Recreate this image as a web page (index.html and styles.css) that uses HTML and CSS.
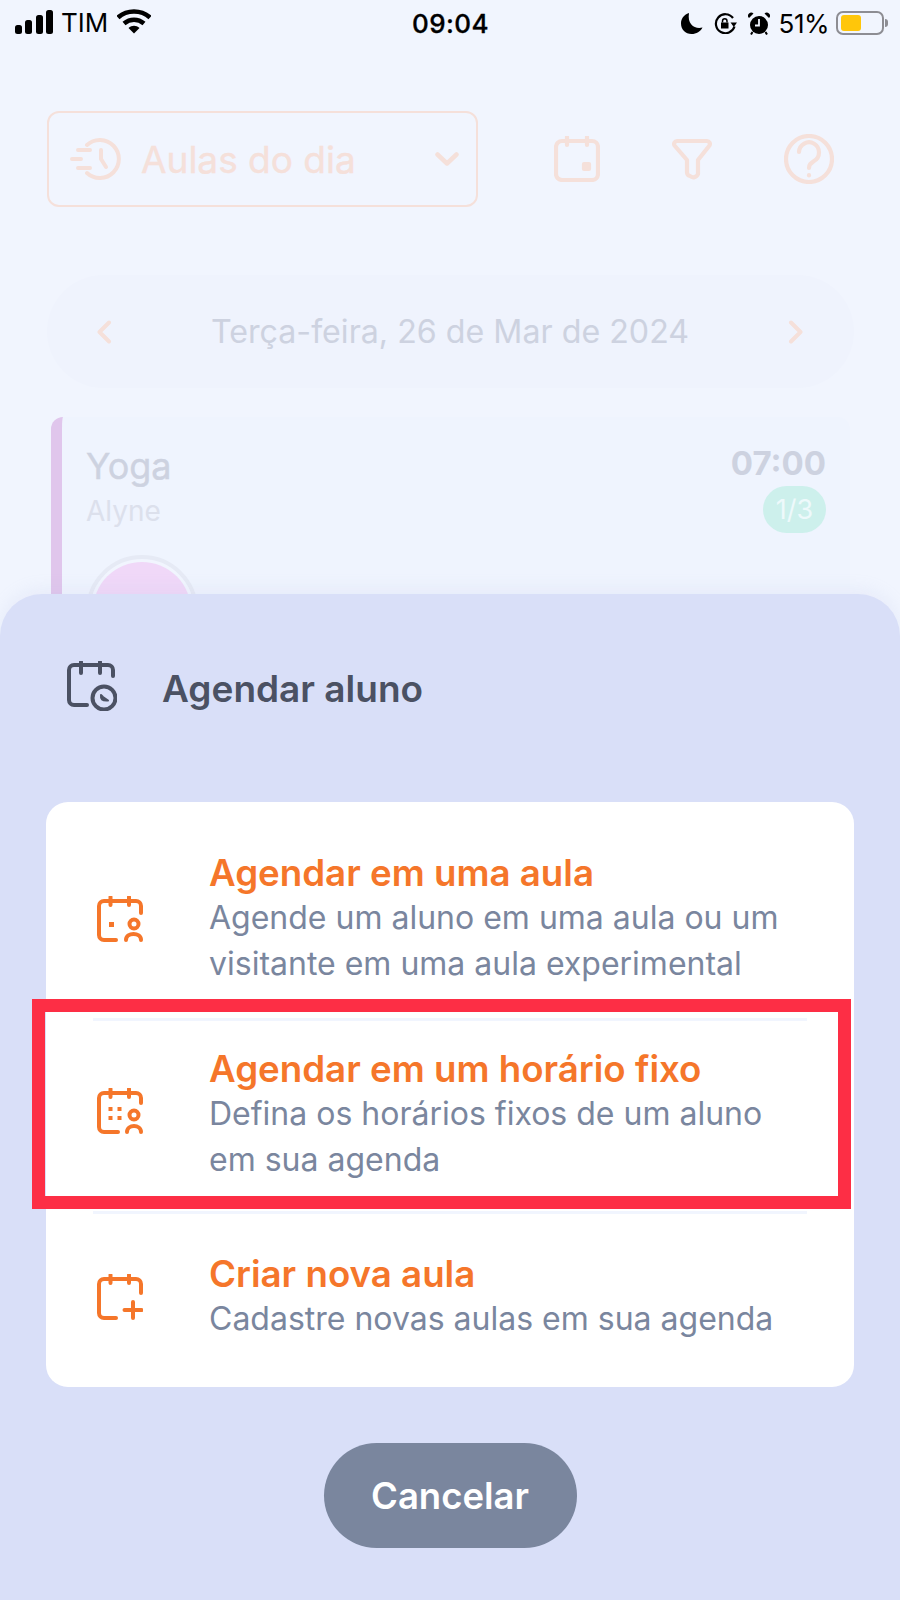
FILE: index.html
```html
<!DOCTYPE html>
<html lang="pt-BR">
<head>
<meta charset="utf-8">
<title>Agendar aluno</title>
<link rel="stylesheet" href="styles.css">
</head>
<body>
<div class="screen">
  <header class="status">
    <div class="status-left">
      <svg class="signal" width="38" height="24" viewBox="0 0 38 24"><rect x="0" y="15" width="7" height="9" rx="2.5"/><rect x="10" y="10" width="7" height="14" rx="2.5"/><rect x="21" y="5" width="7" height="19" rx="2.5"/><rect x="31" y="0" width="7" height="24" rx="2.5"/></svg>
      <span class="carrier">TIM</span>
      <svg class="wifi" width="34" height="25" viewBox="0 0 34 25"><path d="M1 8.500C10 .5 24 .5 33 8.500" fill="none" stroke="#000" stroke-width="4.600"/><path d="M7 14.500C13 9.500 21 9.500 27 14.500" fill="none" stroke="#000" stroke-width="4.600"/><path d="M11.500 19 17 24.500 22.500 19C19 16 15 16 11.500 19Z"/></svg>
    </div>
    <div class="time">09:04</div>
    <div class="status-right">
      <svg width="22" height="21" viewBox="0 0 22 21"><path d="M8 0C2.500 2 0 6 0 10.500 0 16.500 4.500 21 10.500 21 15.500 21 19.500 18.500 21.500 14.500 14.500 16.500 6 12 8 0Z"/></svg>
      <svg width="25" height="21" viewBox="0 0 25 21"><path d="M21.500 13.500A9.500 9.500 0 1 1 20 5" fill="none" stroke="#000" stroke-width="2.200"/><path d="M17.500 9.500h6.500L20.800 14Z"/><path d="M8 9.500h7.500v6H8z"/><path d="M9.500 9.500V8a2.200 2.200 0 0 1 4.500 0v1.500" fill="none" stroke="#000" stroke-width="1.500"/></svg>
      <svg class="alarm" width="22" height="23" viewBox="0 0 22 23"><circle cx="11" cy="13" r="9"/><path d="M1 6 5.500 1.500a3 3 0 0 0-4.500 4.500ZM21 6 16.500 1.500a3 3 0 0 1 4.500 4.500Z"/><path d="M4.500 20 3 22.500M17.500 20 19 22.500" stroke="#000" stroke-width="2"/><path d="M11 7v6.500H7" fill="none" stroke="#f1f5fe" stroke-width="1.800"/></svg>
      <span class="percent">51%</span>
      <div class="battery"><div class="battery-fill"></div></div>
      <div class="battery-tip"></div>
    </div>
  </header>

  <div class="toolbar">
    <div class="select">
      <svg width="52" height="42" viewBox="0 0 52 42" fill="none" stroke="#f5e0da" stroke-width="4" stroke-linecap="round" stroke-linejoin="round"><path d="M17 7A19 19 0 1 1 17 35"/><path d="M31 12v9l5 8"/><path d="M8 12h12M2 21h9M8 30h12"/></svg>
      <span class="select-label">Aulas do dia</span>
      <svg class="select-chevron" width="24" height="14" viewBox="0 0 24 14" fill="none" stroke="#f5e0da" stroke-width="4.500" stroke-linecap="round" stroke-linejoin="round"><path d="M2.500 2.500 12 11.500 21.500 2.500"/></svg>
    </div>
    <div class="tools">
      <svg width="46" height="46" viewBox="0 0 46 46" fill="none" stroke="#f5e0da" stroke-width="4.200" stroke-linecap="round" stroke-linejoin="round"><path d="M8 5h30a6 6 0 0 1 6 6v27a6 6 0 0 1-6 6H8a6 6 0 0 1-6-6V11a6 6 0 0 1 6-6Z"/><path d="M13 1v8M33 1v8"/><rect x="30" y="28" width="5" height="5" fill="#f5e0da"/></svg>
      <svg width="42" height="42" viewBox="0 0 42 42" fill="none" stroke="#f5e0da" stroke-width="4.200" stroke-linecap="round" stroke-linejoin="round"><path d="M6 3h30a3 3 0 0 1 2.500 4.500L27 22v14a5 5 0 0 1-8 2 4 4 0 0 1-3-4V22L3.500 7.500A3 3 0 0 1 6 3Z"/></svg>
      <svg width="50" height="50" viewBox="0 0 50 50" fill="none" stroke="#f5e0da" stroke-width="4.200" stroke-linecap="round" stroke-linejoin="round"><circle cx="25" cy="25" r="23"/><path d="M15 18a10 10 0 1 1 15 9c-3 2-5 3-5 7"/><path d="M25 41v.5"/></svg>
    </div>
  </div>

  <div class="date-pill">
    <svg width="16" height="24" viewBox="0 0 16 24" fill="none" stroke="#f5e0da" stroke-width="4" stroke-linecap="round" stroke-linejoin="round"><path d="M13 2.500 3.500 12 13 21.500"/></svg>
    <span class="date-label">Terça-feira, 26 de Mar de 2024</span>
    <svg width="16" height="24" viewBox="0 0 16 24" fill="none" stroke="#f5e0da" stroke-width="4" stroke-linecap="round" stroke-linejoin="round"><path d="M3 2.500 12.500 12 3 21.500"/></svg>
  </div>

  <article class="class-card">
    <div class="class-top">
      <div>
        <div class="class-name">Yoga</div>
        <div class="class-teacher">Alyne</div>
      </div>
      <div class="class-meta">
        <div class="class-time">07:00</div>
        <div class="class-badge">1/3</div>
      </div>
    </div>
    <div class="avatar"><div class="avatar-fill"></div></div>
  </article>

  <section class="sheet">
    <div class="sheet-head">
      <svg width="50" height="50" viewBox="0 0 50 50" fill="none" stroke="#4b5163" stroke-width="4" stroke-linecap="round" stroke-linejoin="round"><path d="M20 44H7a5 5 0 0 1-5-5V9a5 5 0 0 1 5-5h34a5 5 0 0 1 5 5v6"/><path d="M14 1v11M33 1v11"/><circle cx="37" cy="37" r="11.500"/><path d="M34 34c-.5 4 1 6 7 5.500L36 36Z" fill="#4b5163" stroke-width="2"/></svg>
      <h2 class="sheet-title">Agendar aluno</h2>
    </div>

    <div class="options">
      <div class="option option-first">
        <svg class="option-icon" width="46" height="46" viewBox="0 0 46 46" fill="none" stroke="#f5762a" stroke-width="4" stroke-linecap="round" stroke-linejoin="round"><path d="M19 44H7a5 5 0 0 1-5-5V10a5 5 0 0 1 5-5h32a5 5 0 0 1 5 5v7"/><path d="M13.500 1v8M32 1v8"/><rect x="12" y="26" width="5" height="5" fill="#f5762a" stroke="none"/><circle cx="37" cy="28" r="4.500"/><path d="M29 44c0-8 15-8 15 0"/></svg>
        <div class="option-text">
          <div class="option-title">Agendar em uma aula</div>
          <div class="option-desc">Agende um aluno em uma aula ou um visitante em uma aula experimental</div>
        </div>
      </div>
      <div class="option option-mid">
        <svg class="option-icon" width="46" height="46" viewBox="0 0 46 46" fill="none" stroke="#f5762a" stroke-width="4" stroke-linecap="round" stroke-linejoin="round"><path d="M21 44H7a5 5 0 0 1-5-5V10a5 5 0 0 1 5-5h32a5 5 0 0 1 5 5v5"/><path d="M13.500 1v8M32 1v8"/><g fill="#f5762a" stroke="none"><rect x="11.500" y="19" width="4" height="4"/><rect x="20.500" y="19" width="4" height="4"/><rect x="11.500" y="28" width="4" height="4"/><rect x="20.500" y="28" width="4" height="4"/></g><circle cx="37" cy="27" r="4.500"/><path d="M30 44c0-8 14-8 14 0"/></svg>
        <div class="option-text">
          <div class="option-title">Agendar em um horário fixo</div>
          <div class="option-desc">Defina os horários fixos de um aluno em sua agenda</div>
        </div>
      </div>
      <div class="option option-last">
        <svg class="option-icon" width="46" height="46" viewBox="0 0 46 46" fill="none" stroke="#f5762a" stroke-width="4" stroke-linecap="round" stroke-linejoin="round"><path d="M19 44H7a5 5 0 0 1-5-5V10a5 5 0 0 1 5-5h32a5 5 0 0 1 5 5v9"/><path d="M13.500 1v8M32 1v8"/><path d="M27.500 36h17M36 28v16"/></svg>
        <div class="option-text">
          <div class="option-title">Criar nova aula</div>
          <div class="option-desc">Cadastre novas aulas em sua agenda</div>
        </div>
      </div>
      <div class="highlight"></div>
    </div>

    <button class="cancel" type="button">Cancelar</button>
  </section>
</div>
</body>
</html>
```
FILE: styles.css
```css
* { box-sizing: border-box; }
html, body { margin: 0; padding: 0; }
body { background: #f1f5fe; font-family: Inter, "Noto Sans", sans-serif; }

.screen { position: relative; width: 900px; height: 1600px; overflow: hidden; background: #f1f5fe; }

/* status bar */
.status { display: grid; grid-template-columns: 1fr auto 1fr; align-items: center; height: 46px; padding: 0 12px 0 15px; color: #000; }
.status-left { display: flex; align-items: center; }
.signal { margin-top: -2px; }
.carrier { margin-left: 8px; font-size: 26px; line-height: 1; }
.wifi { margin-left: 9px; margin-top: -4px; }
.time { margin-left: -2px; font-size: 26px; font-weight: 500; letter-spacing: .4px; -webkit-text-stroke: .3px #000; }
.status-right { display: flex; align-items: center; justify-content: flex-end; }
.status-right svg { margin-right: 10px; }
.status-right .alarm { margin-right: 9px; }
.percent { font-size: 26px; margin-right: 7px; letter-spacing: -.5px; }
.battery { width: 48px; height: 24px; border: 2px solid #8d8d93; border-radius: 7px; padding: 2px 3px; }
.battery-fill { width: 20px; height: 16px; background: #ffc60a; border-radius: 3px; }
.battery-tip { width: 3px; height: 8px; margin-left: 1px; background: #8d8d93; border-radius: 0 3px 3px 0; }

/* dimmed page */
.toolbar { display: flex; align-items: center; margin-top: 65px; padding-left: 47px; }
.select { display: flex; align-items: center; width: 431px; height: 96px; padding: 0 17px 0 21px; border: 2px solid #f5e0da; border-radius: 12px; }
.select-label { margin-left: 19px; font-size: 37px; font-weight: 400; color: #f5e0da; -webkit-text-stroke: .4px #f5e0da; }
.select-chevron { margin-left: auto; }
.tools { display: flex; align-items: center; margin-left: 76px; gap: 71px; }

.date-pill { display: flex; align-items: center; justify-content: space-between; width: 807px; height: 113px; margin: 68px 0 0 47px; padding: 0 50px 0 49px; background: #eff3fd; border-radius: 57px; }
.date-label { font-size: 32.2px; color: #cdd2e0; }

.class-card { width: 799px; height: 300px; margin: 29px 0 0 51px; padding: 27px 24px 0 24px; background: #eff4fe; border-left: 11px solid #e0c6ec; border-radius: 12px 12px 0 0; }
.class-top { display: flex; justify-content: space-between; }
.class-name { font-size: 36px; font-weight: 400; line-height: 44px; color: #cdd2e0; -webkit-text-stroke: .4px #cdd2e0; }
.class-teacher { margin-top: 3px; font-size: 28px; line-height: 40px; color: #dce0ec; }
.class-meta { display: flex; flex-direction: column; align-items: flex-end; }
.class-time { font-size: 33px; font-weight: 700; line-height: 38px; color: #cdd2e0; }
.class-badge { display: flex; align-items: center; justify-content: center; width: 63px; height: 47px; margin-top: 4px; background: #cdf0ec; border-radius: 24px; font-size: 27px; color: #eef9fb; }
.avatar { width: 112px; height: 112px; margin-top: 22px; padding: 3px; border: 4px solid #e6eaf5; border-radius: 50%; background: #f1f5fe; }
.avatar-fill { width: 98px; height: 98px; border-radius: 50%; background: #f0d8f8; }

/* bottom sheet */
.sheet { position: absolute; left: 0; right: 0; top: 594px; bottom: 0; padding: 67px 46px 0; background: #d9dff8; border-radius: 42px 42px 0 0; box-shadow: 0 -6px 16px rgba(170, 180, 220, .12); }
.sheet-head { display: flex; align-items: center; height: 50px; padding-left: 21px; }
.sheet-title { margin: 5px 0 0 45px; font-size: 37px; font-weight: 600; line-height: 44px; color: #4b5163; }

.options { position: relative; margin-top: 91px; padding: 0 47px; background: #fff; border-radius: 22px; }
.option { display: flex; align-items: center; padding-left: 4px; }
.option-first { height: 219px; padding-top: 17px; border-bottom: 3px solid #f1f5fe; }
.option-mid { height: 193px; padding-bottom: 2px; border-bottom: 3px solid #f1f5fe; }
.option-mid .option-icon { margin-bottom: 8px; }
.option-last { height: 173px; padding-bottom: 8px; }
.option-icon { flex: none; }
.option-text { width: 580px; margin-left: 66px; }
.option-title { font-size: 36.7px; font-weight: 600; line-height: 44px; color: #f5762a; }
.option-desc { font-size: 32px; line-height: 46px; color: #7a869e; }
.highlight { position: absolute; left: -14px; top: 197px; width: 819px; height: 210px; border: 13px solid #fd2e45; }

.cancel { display: block; width: 253px; height: 105px; margin: 56px auto 0; border: 0; border-radius: 53px; background: #7a869e; color: #fff; font-family: Inter, "Noto Sans", sans-serif; font-size: 36.5px; font-weight: 600; }
```
